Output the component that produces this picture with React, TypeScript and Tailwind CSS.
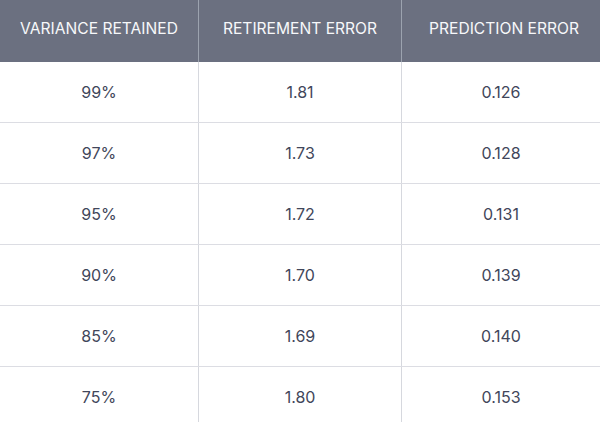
const headers = ['VARIANCE RETAINED', 'RETIREMENT ERROR', 'PREDICTION ERROR'];

const rows: [string, string, string][] = [
  ['99%', '1.81', '0.126'],
  ['97%', '1.73', '0.128'],
  ['95%', '1.72', '0.131'],
  ['90%', '1.70', '0.139'],
  ['85%', '1.69', '0.140'],
  ['75%', '1.80', '0.153'],
];

const colW = ['w-[199px]', 'w-[203px]', 'flex-1'];

export default function App() {
  return (
    <div className="h-[422px] w-[600px] overflow-hidden bg-white font-['Inter',sans-serif]">
      <div className="flex h-[62px] bg-[#6b7080] text-[15.6px] text-[#f7f8fa]">
        {headers.map((h, i) => (
          <div
            key={h}
            className={`${colW[i]} flex items-center justify-center pb-[4px] ${i < 2 ? 'border-r border-[#9ca3af]' : ''} ${i === 2 ? 'pl-[6px]' : ''}`}
          >
            {h}
          </div>
        ))}
      </div>
      {rows.map((r, ri) => (
        <div key={ri} className="flex h-[61px] border-b border-[#dcdde3] text-[16px] text-[#41465a]">
          {r.map((c, i) => (
            <div
              key={i}
              className={`${colW[i]} flex items-center justify-center ${i < 2 ? 'border-r border-[#d6d8de]' : ''}`}
            >
              {c}
            </div>
          ))}
        </div>
      ))}
    </div>
  );
}
